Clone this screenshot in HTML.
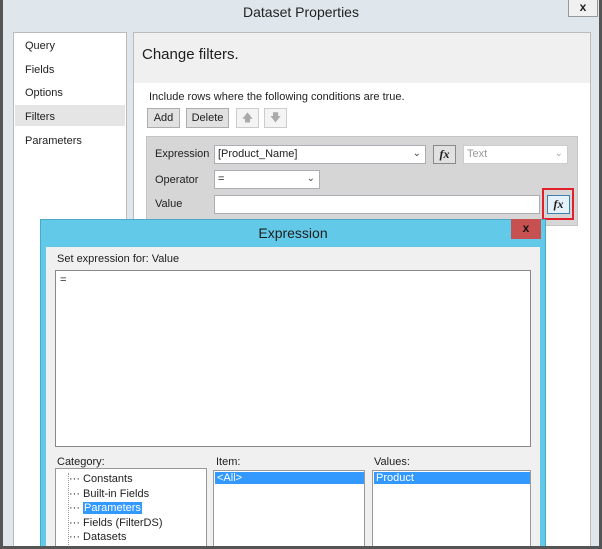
<!DOCTYPE html>
<html style="width:602px;height:549px;overflow:hidden"><head><style>
*{margin:0;padding:0;box-sizing:border-box}
body{width:602px;height:549px;overflow:hidden;background:#dfe7ec;font-family:"Liberation Sans",sans-serif;font-size:11px;color:#1e1e1e;position:relative}
.a{position:absolute}
.btn{position:absolute;background:#e1e1e1;border:1px solid #adadad;text-align:center;line-height:18px;font-size:11px}
.box{position:absolute;background:#fff;border:1px solid #abadb3}
.chev{position:absolute;right:4px;top:2px;font-size:10px;color:#444}
.fx{position:absolute;background:#e1e1e1;border:1px solid #8a8a8a;font-family:"Liberation Serif",serif;font-style:italic;font-weight:bold;font-size:12px;text-align:center;line-height:17px}
</style></head><body>
<div class="a" style="left:0;top:4px;width:602px;text-align:center;font-size:14px;color:#222">Dataset Properties</div>
<div class="a" style="left:568px;top:0;width:30px;height:17px;background:#f0f0f0;border:1px solid #999;border-top:none;text-align:center;font-weight:bold;font-size:12px;line-height:15px">x</div>

<div class="a" style="left:13px;top:32px;width:114px;height:520px;background:#fff;border:1px solid #bbb"></div>
<div class="a" style="left:15px;top:105px;width:110px;height:21px;background:#e5e5e5"></div>
<div class="a" style="left:25px;top:40px;line-height:12px">Query</div>
<div class="a" style="left:25px;top:64px">Fields</div>
<div class="a" style="left:25px;top:87px">Options</div>
<div class="a" style="left:25px;top:111px">Filters</div>
<div class="a" style="left:25px;top:135px">Parameters</div>

<div class="a" style="left:133px;top:32px;width:458px;height:520px;background:#fff;border:1px solid #bbb"></div>
<div class="a" style="left:134px;top:33px;width:456px;height:50px;background:#f0f0f0"></div>
<div class="a" style="left:142px;top:46px;font-size:15px">Change filters.</div>
<div class="a" style="left:149px;top:91px">Include rows where the following conditions are true.</div>
<div class="btn" style="left:147px;top:108px;width:33px;height:20px">Add</div>
<div class="btn" style="left:186px;top:108px;width:43px;height:20px">Delete</div>
<div class="btn" style="left:236px;top:108px;width:23px;height:20px;background:#f4f4f4;border-color:#ccc;color:#aaa">&#x1F845;</div>
<div class="btn" style="left:264px;top:108px;width:23px;height:20px;background:#f4f4f4;border-color:#ccc;color:#aaa">&#x1F847;</div>

<div class="a" style="left:146px;top:136px;width:432px;height:90px;background:#d6d6d6;border:1px solid #c4c4c4"></div>
<div class="a" style="left:155px;top:148px">Expression</div>
<div class="box" style="left:214px;top:145px;width:212px;height:19px;padding:2px 3px">[Product_Name]<span class="chev">&#8964;</span></div>
<div class="fx" style="left:433px;top:145px;width:23px;height:19px">fx</div>
<div class="box" style="left:463px;top:145px;width:105px;height:19px;padding:2px 3px;color:#999;border-color:#ccc">Text<span class="chev" style="color:#aaa">&#8964;</span></div>
<div class="a" style="left:155px;top:174px">Operator</div>
<div class="box" style="left:214px;top:170px;width:106px;height:19px;padding:2px 3px">=<span class="chev">&#8964;</span></div>
<div class="a" style="left:155px;top:198px">Value</div>
<div class="box" style="left:214px;top:195px;width:326px;height:19px"></div>
<div class="a" style="left:542px;top:188px;width:32px;height:32px;border:2px solid #e0202a"></div>
<div class="fx" style="left:547px;top:195px;width:23px;height:19px;border-color:#3c7fb1;background:#e5f1fb">fx</div>

<div class="a" style="left:40px;top:219px;width:506px;height:335px;background:#62c9e8;border:1px solid #4aa8c8"></div>
<div class="a" style="left:40px;top:225px;width:506px;text-align:center;font-size:14px">Expression</div>
<div class="a" style="left:511px;top:219px;width:30px;height:20px;background:#c75050;text-align:center;font-weight:bold;font-size:12px;line-height:19px;color:#111">x</div>
<div class="a" style="left:46px;top:247px;width:494px;height:310px;background:#f0f0f0"></div>
<div class="a" style="left:57px;top:253px">Set expression for: Value</div>
<div class="box" style="left:55px;top:270px;width:476px;height:177px;border-color:#888;padding:3px 4px">=</div>
<div class="a" style="left:57px;top:456px">Category:</div>
<div class="box" style="left:55px;top:468px;width:152px;height:90px;border-color:#999"></div>
<div class="a" style="left:68px;top:473px;width:1px;height:76px;border-left:1px dotted #999"></div>
<div class="a" style="left:69px;top:472px;line-height:14.5px">
<div>&#183;&#183;&#183;&nbsp;Constants</div><div>&#183;&#183;&#183;&nbsp;Built-in Fields</div><div>&#183;&#183;&#183;&nbsp;<span style="background:#3399ff;color:#fff;padding:0 1px">Parameters</span></div><div>&#183;&#183;&#183;&nbsp;Fields (FilterDS)</div><div>&#183;&#183;&#183;&nbsp;Datasets</div>
</div>
<div class="a" style="left:216px;top:456px">Item:</div>
<div class="box" style="left:213px;top:470px;width:152px;height:90px;border-color:#999"></div>
<div class="a" style="left:215px;top:472px;width:149px;height:12px;background:#3399ff;color:#fff;line-height:12px;padding-left:2px">&lt;All&gt;</div>
<div class="a" style="left:374px;top:456px">Values:</div>
<div class="box" style="left:372px;top:470px;width:159px;height:90px;border-color:#999"></div>
<div class="a" style="left:374px;top:472px;width:156px;height:12px;background:#3399ff;color:#fff;line-height:12px;padding-left:2px">Product</div>
<div class="a" style="left:0;top:0;width:3px;height:549px;background:#555"></div>
<div class="a" style="left:599px;top:0;width:3px;height:549px;background:#555"></div>
<div class="a" style="left:0;top:546px;width:602px;height:3px;background:#555"></div>
</body></html>
